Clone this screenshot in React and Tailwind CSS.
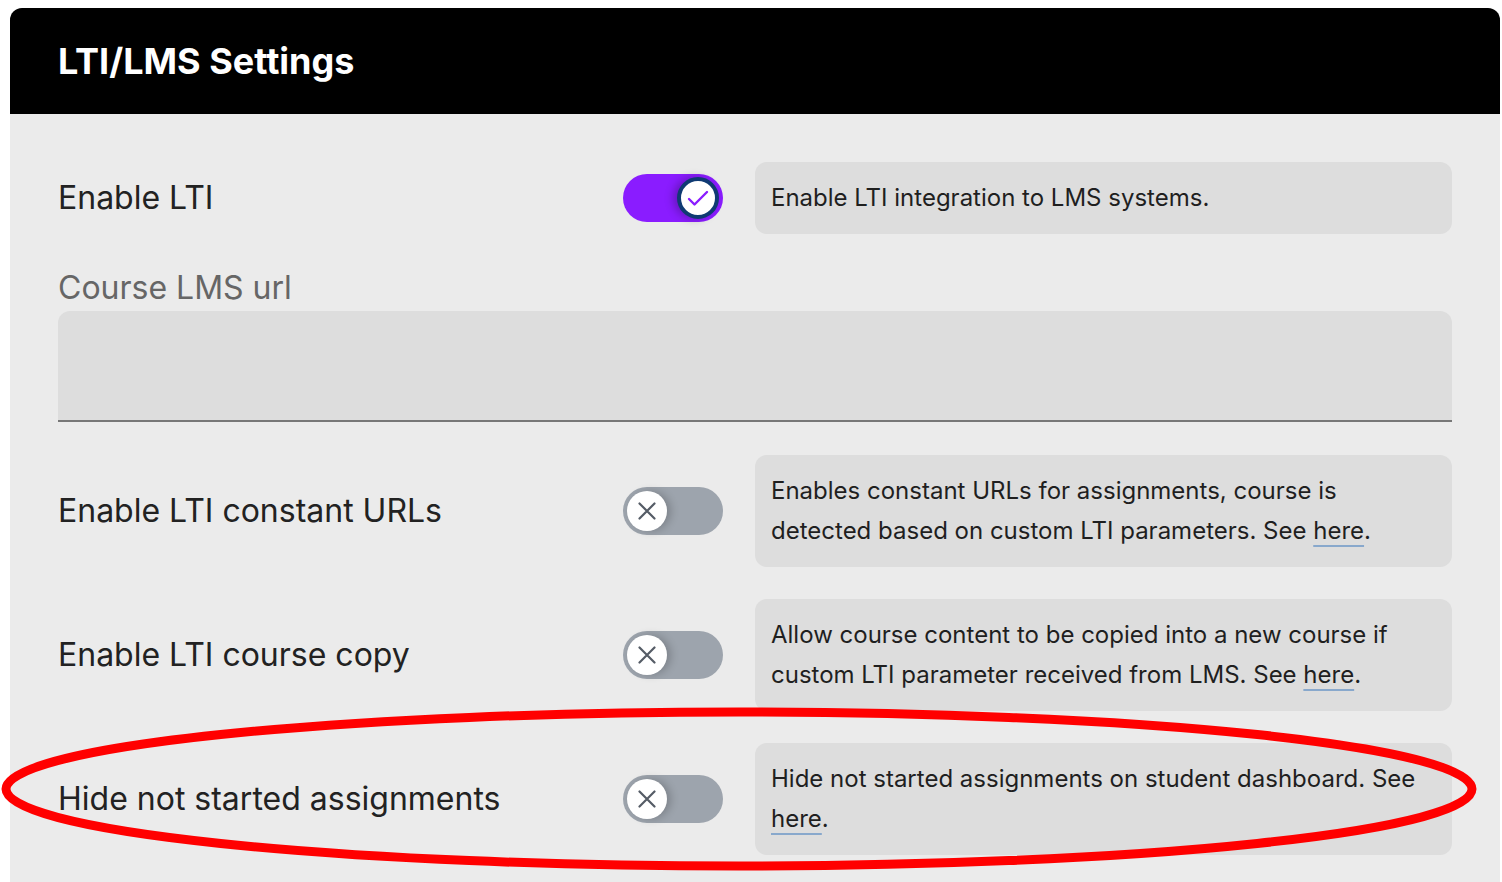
import React, { useState } from 'react';

const settings = [
  {
    key: 'constantUrls',
    label: 'Enable LTI constant URLs',
    text: 'Enables constant URLs for assignments, course is detected based on custom LTI parameters. See ',
  },
  {
    key: 'courseCopy',
    label: 'Enable LTI course copy',
    text: 'Allow course content to be copied into a new course if custom LTI parameter received from LMS. See ',
  },
  {
    key: 'hideNotStarted',
    label: 'Hide not started assignments',
    text: 'Hide not started assignments on student dashboard. See ',
  },
];

function Toggle({ on, onChange }) {
  return (
    <button
      type="button"
      onClick={onChange}
      className={
        'flex h-[48px] w-[100px] shrink-0 items-center rounded-full px-[4px] ' +
        (on ? 'justify-end bg-[#8a1cff]' : 'justify-start bg-[#9da4ad]')
      }
    >
      {on ? (
        <span className="flex h-[42px] w-[42px] items-center justify-center rounded-full border-[4px] border-[#0f3a73] bg-white shadow-[-4px_0_8px_rgba(0,0,0,0.25)]">
          <svg width="24" height="24" viewBox="0 0 24 24" fill="none">
            <path d="M3 13l5.5 5.5L21 6" stroke="#8a1cff" strokeWidth="2.4" strokeLinecap="round" strokeLinejoin="round" />
          </svg>
        </span>
      ) : (
        <span className="flex h-[40px] w-[40px] items-center justify-center rounded-full bg-white shadow-[4px_0_8px_rgba(0,0,0,0.2)]">
          <svg width="18" height="18" viewBox="0 0 18 18" fill="none">
            <path d="M1.5 1.5l15 15M16.5 1.5l-15 15" stroke="#555c66" strokeWidth="2.2" strokeLinecap="round" />
          </svg>
        </span>
      )}
    </button>
  );
}

function SettingRow({ label, on, onToggle, children }) {
  return (
    <div className="flex items-center">
      <div className="w-[565px] shrink-0 text-[32px] text-[#222]">{label}</div>
      <Toggle on={on} onChange={onToggle} />
      <div className="ml-[32px] flex-1 rounded-[12px] bg-[#dddddd] px-4 py-4 text-[24px] leading-[40px] text-[#1f1f1f]">
        {children}
      </div>
    </div>
  );
}

export default function App() {
  const [lti, setLti] = useState(true);
  const [flags, setFlags] = useState({ constantUrls: false, courseCopy: false, hideNotStarted: false });
  const [url, setUrl] = useState('');

  return (
    <div className="relative min-h-screen overflow-hidden bg-white pl-[10px] pr-[2px] pt-[8px]" style={{ fontFamily: 'Inter, "Noto Sans", sans-serif' }}>
      <div className="h-[874px] rounded-t-[12px] bg-[#ebebeb]">
        <div className="flex h-[106px] items-center rounded-t-[12px] bg-black px-12">
          <h1 className="text-[36px] font-bold text-white">LTI/LMS Settings</h1>
        </div>

        <div className="px-12 pt-[48px]">
          <SettingRow label="Enable LTI" on={lti} onToggle={() => setLti(!lti)}>
            Enable LTI integration to LMS systems.
          </SettingRow>

          <div className="mt-[35px] text-[32px] leading-[38px] text-[#666]">Course LMS url</div>
          <input
            value={url}
            onChange={(e) => setUrl(e.target.value)}
            className="mt-[4px] block h-[111px] w-full rounded-t-[12px] border-b-2 border-[#777] bg-[#dddddd] px-4 text-[24px] outline-none"
          />

          <div className="mt-[33px] flex flex-col gap-[32px]">
            {settings.map((s) => (
              <SettingRow
                key={s.key}
                label={s.label}
                on={flags[s.key]}
                onToggle={() => setFlags({ ...flags, [s.key]: !flags[s.key] })}
              >
                {s.text}
                <a href="#" className="underline decoration-[#88a8cc] decoration-2 underline-offset-[6px]">here</a>.
              </SettingRow>
            ))}
          </div>
        </div>
      </div>

      {/* annotation ring */}
      <svg className="pointer-events-none absolute left-0 top-0" width="1502" height="882">
        <ellipse cx="739" cy="789" rx="733" ry="77" fill="none" stroke="#ff0000" strokeWidth="9" />
      </svg>
    </div>
  );
}
